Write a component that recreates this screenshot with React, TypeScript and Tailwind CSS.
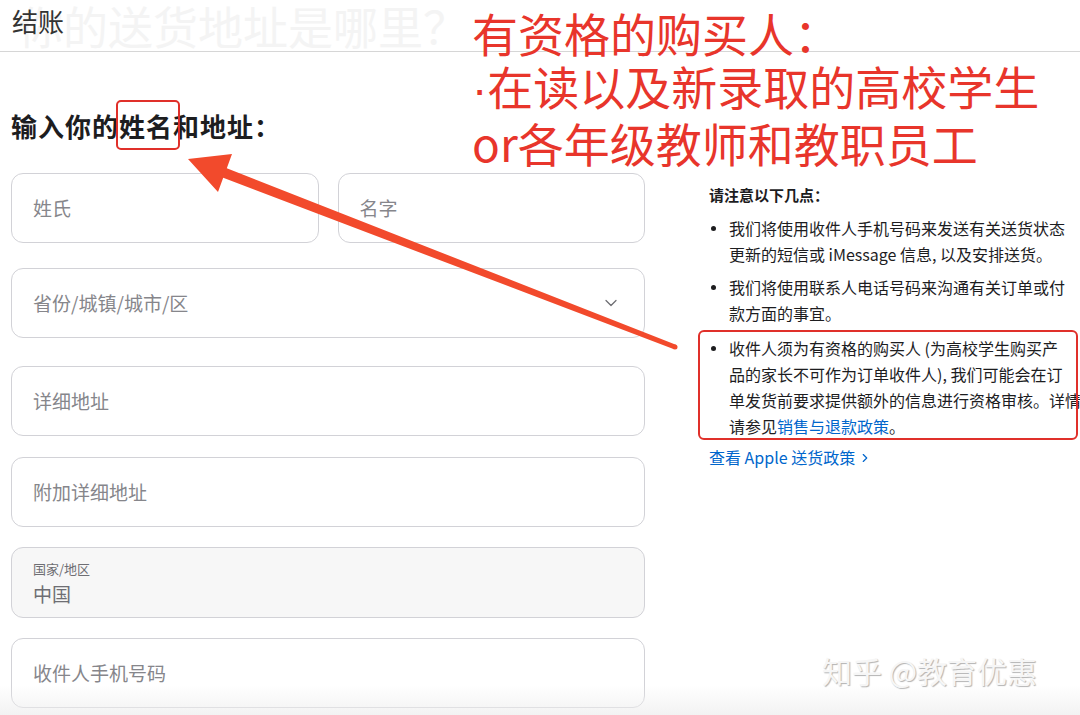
import React from 'react';
import { ChevronDown, ChevronRight } from 'lucide-react';

const Field = ({ label, className = '', children }: { label: string; className?: string; children?: React.ReactNode }) => (
	<div
		className={`h-[70px] rounded-[12px] border border-[#d2d2d7] bg-white flex items-center px-[21px] text-[19px] text-[#86868b] ${className}`}>
		<span className="flex-1">{label}</span>
		{children}
	</div>
);

const Bullet = ({ lines, className = '' }: { lines: React.ReactNode[]; className?: string }) => (
	<div className={`flex ${className}`}>
		<span className="w-[20px] shrink-0 pl-[2px] pt-[11px]">
			<span className="block w-[5px] h-[5px] rounded-full bg-[#1d1d1f]" />
		</span>
		<div className="text-[16px] leading-[26px] text-[#1d1d1f]">
			{lines.map((l, i) => (
				<div key={i} className="whitespace-nowrap">
					{l}
				</div>
			))}
		</div>
	</div>
);

export default function App() {
	return (
		<div className="relative w-[1080px] h-[715px] overflow-hidden bg-white font-['Noto_Sans_CJK_SC','Noto_Sans',sans-serif] text-[#1d1d1f]">
			{/* шапка */}
			<div className="relative h-[52px] border-b border-[#d6d6d6] overflow-hidden">
				<div className="absolute left-[18px] top-[3px] text-[45px] leading-none text-[#f4f4f4] whitespace-nowrap">
					你的送货地址是哪里？
				</div>
				<div className="relative pl-[12px] pt-[4px] text-[26px] leading-[34px] text-[#333]">结账</div>
			</div>

			<div className="flex">
				{/* форма */}
				<div className="w-[645px] pl-[11px]">
					<h2 className="mt-[57px] text-[26px] leading-[34px] font-bold tracking-[1px] text-[#1d1d1f]">
						输入你的姓名和地址：
					</h2>
					<div className="mt-[30px] flex gap-[19px]">
						<Field label="姓氏" className="flex-1" />
						<Field label="名字" className="flex-1" />
					</div>
					<Field label="省份/城镇/城市/区" className="mt-[25px]">
						<ChevronDown size={20} strokeWidth={1.5} className="text-[#6e6e73] mr-[2px]" />
					</Field>
					<Field label="详细地址" className="mt-[28px]" />
					<Field label="附加详细地址" className="mt-[21px]" />
					<div className="mt-[20px] h-[71px] rounded-[12px] border border-[#d2d2d7] bg-[#f7f7f7] px-[21px] pt-[12px]">
						<div className="text-[13px] leading-[18px] text-[#6e6e73]">国家/地区</div>
						<div className="mt-[3px] text-[19px] leading-[26px] text-[#6e6e73]">中国</div>
					</div>
					<Field label="收件人手机号码" className="mt-[20px]" />
				</div>

				{/* примечания */}
				<div className="ml-[64px] w-[370px] pt-[131px]">
					<div className="text-[15px] leading-[24px] font-bold">请注意以下几点：</div>
					<Bullet
						className="mt-[8px]"
						lines={['我们将使用收件人手机号码来发送有关送货状态', '更新的短信或 iMessage 信息, 以及安排送货。']}
					/>
					<Bullet className="mt-[7px]" lines={['我们将使用联系人电话号码来沟通有关订单或付', '款方面的事宜。']} />
					<Bullet
						className="mt-[9px]"
						lines={[
							'收件人须为有资格的购买人 (为高校学生购买产',
							'品的家长不可作为订单收件人), 我们可能会在订',
							'单发货前要求提供额外的信息进行资格审核。详情',
							<>
								请参见<span className="text-[#0066cc]">销售与退款政策</span>。
							</>,
						]}
					/>
					<div className="mt-[5px] flex items-center text-[16px] leading-[26px] text-[#0066cc]">
						查看 Apple 送货政策
						<ChevronRight size={14} strokeWidth={2} className="ml-[3px] mt-[2px]" />
					</div>
				</div>
			</div>

			{/* пометки поверх скриншота */}
			<div className="absolute left-[472px] top-[6px] text-[46px] leading-[53px] text-[#e8352b] whitespace-nowrap">
				<div>有资格的购买人：</div>
				<div>
					<span className="font-['Liberation_Sans',sans-serif]">·</span>在读以及新录取的高校学生
				</div>
				<div>or各年级教师和教职员工</div>
			</div>
			<div className="absolute left-[116px] top-[100px] w-[64px] h-[50px] border-2 border-[#e0302a] rounded-[5px]" />
			<div className="absolute left-[698px] top-[330px] w-[380px] h-[110px] border-2 border-[#e0302a] rounded-[6px]" />
			<svg className="absolute inset-0 pointer-events-none" width={1080} height={715} viewBox="0 0 1080 715">
				<polygon
					points="188,159 232,154 226.8,168.3 675.9,344.7 674.1,349.3 223.2,177.7 218,192"
					fill="#f24a2c"
				/>
				<circle cx={675} cy={347} r={2.5} fill="#f24a2c" />
			</svg>

			<div className="absolute left-[822px] top-[650px] text-[30px] leading-[40px] text-[#f6f6f6] whitespace-nowrap [text-shadow:1px_1px_1px_rgba(0,0,0,0.3)]">
				知乎 @教育优惠
			</div>
			<div className="absolute left-0 right-0 bottom-0 h-[30px] bg-linear-to-b from-transparent to-[#ededed]/70 pointer-events-none" />
		</div>
	);
}
